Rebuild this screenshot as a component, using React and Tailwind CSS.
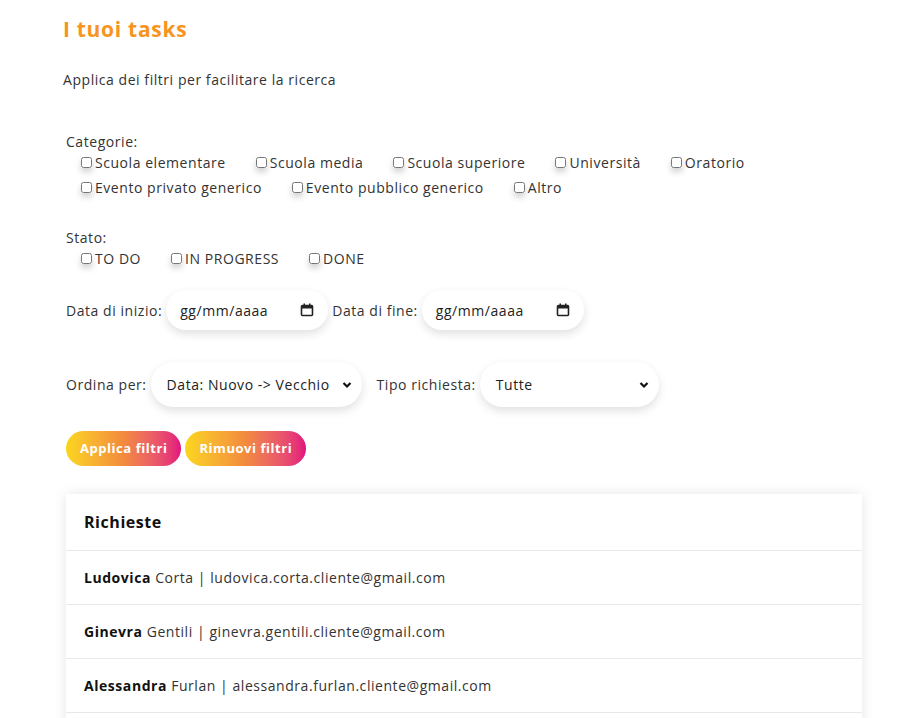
import React from "react";

const categorie = [
  ["Scuola elementare", "Scuola media", "Scuola superiore", "Università", "Oratorio"],
  ["Evento privato generico", "Evento pubblico generico", "Altro"],
];
const stati = ["TO DO", "IN PROGRESS", "DONE"];
const richieste = [
  { nome: "Ludovica", cognome: "Corta", email: "ludovica.corta.cliente@gmail.com" },
  { nome: "Ginevra", cognome: "Gentili", email: "ginevra.gentili.cliente@gmail.com" },
  { nome: "Alessandra", cognome: "Furlan", email: "alessandra.furlan.cliente@gmail.com" },
];

function Check({ label }) {
  return (
    <label className="flex items-center mr-[30px]">
      <input type="checkbox" className="w-[11px] h-[11px] m-0 mr-[3px] shadow-[0_4px_6px_rgba(0,0,0,0.18)]" />
      <span>{label}</span>
    </label>
  );
}

function DateBox() {
  return (
    <div className="flex items-center justify-between w-[162px] h-[40px] pl-[14px] pr-[14px] rounded-full bg-white shadow-[0_4px_10px_rgba(0,0,0,0.12)]">
      <span className="text-[#222]">gg/mm/aaaa</span>
      <svg width="14" height="14" viewBox="0 0 14 14">
        <rect x="1.5" y="2.5" width="11" height="10" rx="1" fill="none" stroke="#222" strokeWidth="1.6" />
        <rect x="1.5" y="2.5" width="11" height="3" fill="#222" />
        <rect x="3.5" y="0.5" width="1.5" height="2.5" fill="#222" />
        <rect x="9" y="0.5" width="1.5" height="2.5" fill="#222" />
      </svg>
    </div>
  );
}

function Select({ value, width }) {
  return (
    <div className={`flex items-center justify-between ${width} h-[45px] pl-[16px] pr-[10px] rounded-full bg-white shadow-[0_4px_10px_rgba(0,0,0,0.12)]`}>
      <span className="text-[#222]">{value}</span>
      <svg width="10" height="8" viewBox="0 0 10 8">
        <path d="M1.5 2 L5 5.5 L8.5 2" fill="none" stroke="#111" strokeWidth="2.2" />
      </svg>
    </div>
  );
}

export default function App() {
  return (
    <div className="min-h-[718px] bg-white text-[14px] tracking-[0.55px] text-[#333] font-['Open_Sans',sans-serif]">
      <div className="pl-[63px] pt-[16px]">
        <h1 className="text-[21px] leading-[26px] font-bold tracking-[0.7px] text-[#f7941d]">I tuoi tasks</h1>
        <p className="mt-[28px] leading-[20px]">Applica dei filtri per facilitare la ricerca</p>
      </div>

      <div className="pl-[66px] pr-[50px]">
        <div className="mt-[42px] leading-[20px]">Categorie:</div>
        <div className="-mt-[2px] pl-[15px] text-[#333]">
          {categorie.map((row, i) => (
            <div key={i} className="flex h-[25px] items-center">
              {row.map((c) => (
                <Check key={c} label={c} />
              ))}
            </div>
          ))}
        </div>

        <div className="mt-[28px] leading-[20px]">Stato:</div>
        <div className="pl-[15px] flex h-[20px] items-center">
          {stati.map((s) => (
            <Check key={s} label={s} />
          ))}
        </div>

        <div className="mt-[22px] flex items-center gap-[4px]">
          <span>Data di inizio:</span>
          <DateBox />
          <span>Data di fine:</span>
          <DateBox />
        </div>

        <div className="mt-[32px] flex items-center gap-[4px]">
          <span>Ordina per:</span>
          <Select value="Data: Nuovo -> Vecchio" width="w-[211px]" />
          <span className="ml-[11px]">Tipo richiesta:</span>
          <Select value="Tutte" width="w-[179px]" />
        </div>

        <div className="mt-[24px] flex gap-[4px]">
          {["Applica filtri", "Rimuovi filtri"].map((b) => (
            <button
              key={b}
              className="h-[35px] px-[14px] rounded-full bg-gradient-to-r from-[#fad61c] via-[#f28a3c] to-[#e20f7d] text-white font-bold text-[13px]"
            >
              {b}
            </button>
          ))}
        </div>

        <div className="mt-[28px] w-[796px] bg-white shadow-[0_0_12px_rgba(0,0,0,0.10)]">
          <div className="h-[57px] flex items-center px-[18px] border-b border-[#e8e8e8]">
            <h2 className="text-[16px] font-bold text-[#111]">Richieste</h2>
          </div>
          {richieste.map((r) => (
            <div key={r.email} className="h-[54px] flex items-center px-[18px] border-b border-[#e8e8e8]">
              <span>
                <b className="text-[#111]">{r.nome}</b> {r.cognome} | {r.email}
              </span>
            </div>
          ))}
          <div className="h-[20px]" />
        </div>
      </div>
    </div>
  );
}
